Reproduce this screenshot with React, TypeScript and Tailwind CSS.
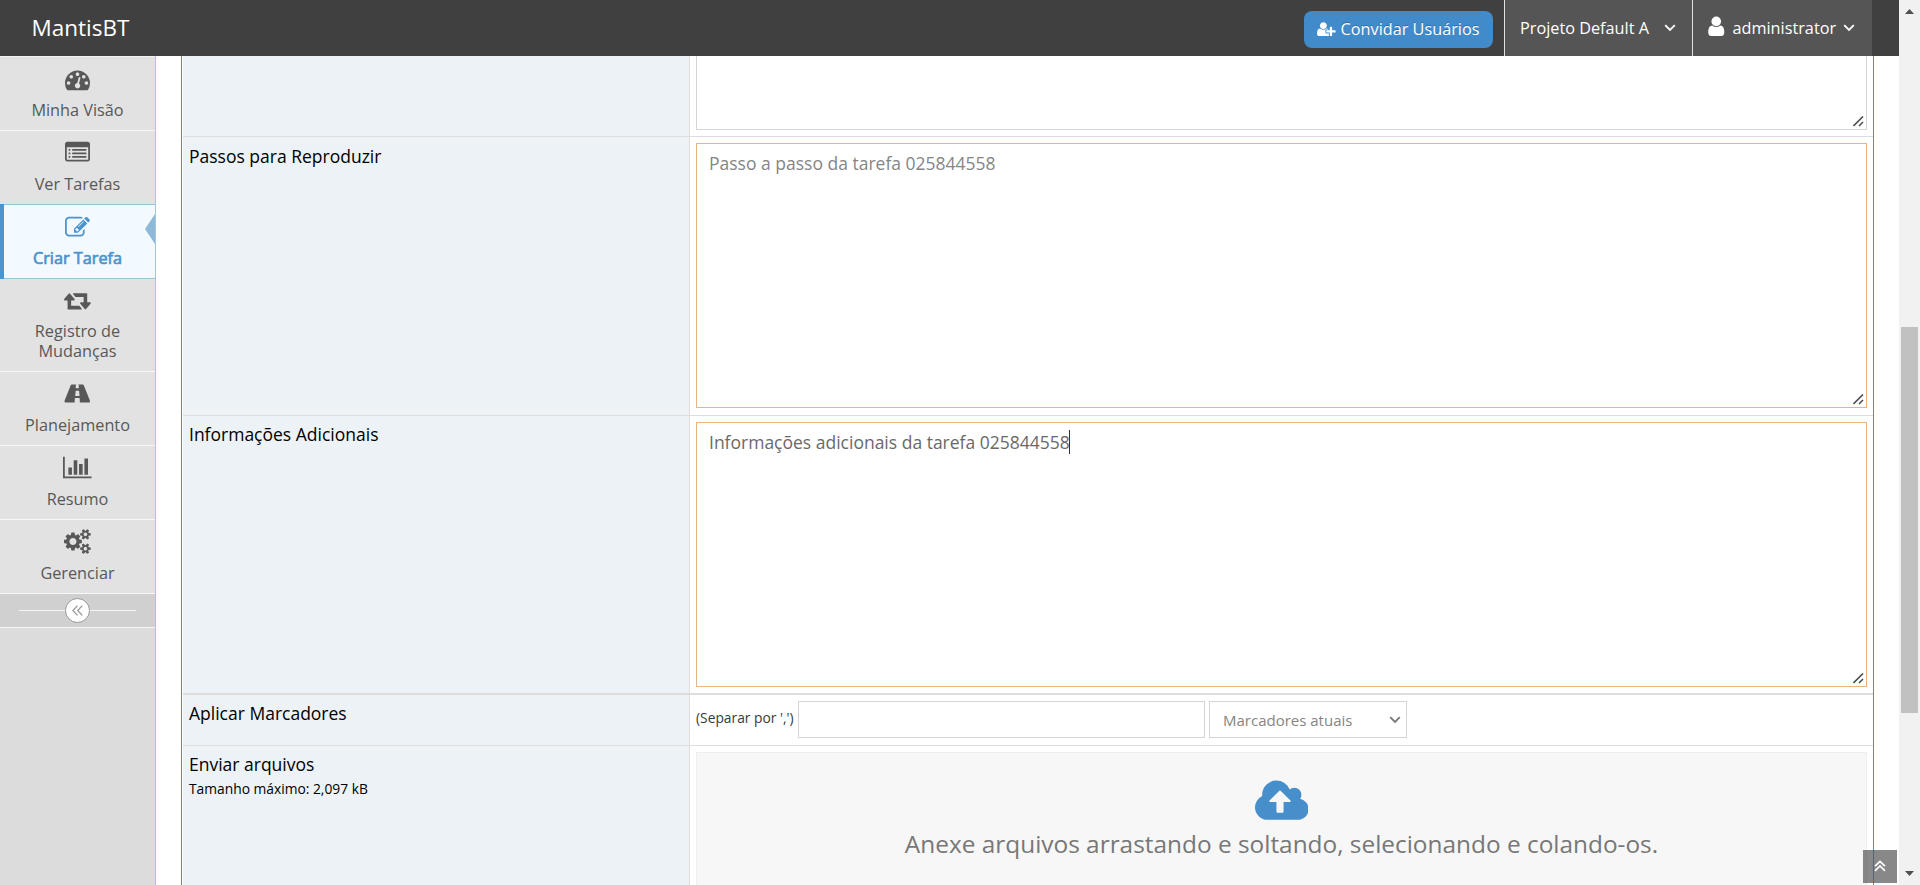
import React from "react";

type IconProps = { size: number; width?: number; d: string; minX?: number; className?: string };

function Icon({ size, width = 1792, d, minX = 0, className = "" }: IconProps) {
  return (
    <svg
      width={(size * width) / 1792}
      height={size}
      viewBox={`${minX} 0 ${width} 1792`}
      fill="currentColor"
      className={`shrink-0 ${className}`}
    >
      <path d={d} />
    </svg>
  );
}

const paths = {
  dashboard:
    "M384 1152q0-53-37.5-90.5t-90.5-37.5-90.5 37.5-37.5 90.5 37.5 90.5 90.5 37.5 90.5-37.5 37.5-90.5zm192-448q0-53-37.5-90.5t-90.5-37.5-90.5 37.5-37.5 90.5 37.5 90.5 90.5 37.5 90.5-37.5 37.5-90.5zm428 481l101-382q6-26-7.5-48.5t-38.5-29.5-48 6.5-30 39.5l-101 382q-60 5-107 43.5t-63 98.5q-20 77 20 146t117 89 146-20 89-117q16-60-6-117t-72-91zm660-33q0-53-37.5-90.5t-90.5-37.5-90.5 37.5-37.5 90.5 37.5 90.5 90.5 37.5 90.5-37.5 37.5-90.5zm-640-640q0-53-37.5-90.5t-90.5-37.5-90.5 37.5-37.5 90.5 37.5 90.5 90.5 37.5 90.5-37.5 37.5-90.5zm448 192q0-53-37.5-90.5t-90.5-37.5-90.5 37.5-37.5 90.5 37.5 90.5 90.5 37.5 90.5-37.5 37.5-90.5zm320 448q0 261-141 483-19 29-54 29h-1402q-35 0-54-29-141-221-141-483 0-182 71-348t191-286 286-191 348-71 348 71 286 191 191 286 71 348z",
  list:
    "M384 1184v64q0 13-9.5 22.5t-22.5 9.5h-64q-13 0-22.5-9.5t-9.5-22.5v-64q0-13 9.5-22.5t22.5-9.5h64q13 0 22.5 9.5t9.5 22.5zm0-256v64q0 13-9.5 22.5t-22.5 9.5h-64q-13 0-22.5-9.5t-9.5-22.5v-64q0-13 9.5-22.5t22.5-9.5h64q13 0 22.5 9.5t9.5 22.5zm0-256v64q0 13-9.5 22.5t-22.5 9.5h-64q-13 0-22.5-9.5t-9.5-22.5v-64q0-13 9.5-22.5t22.5-9.5h64q13 0 22.5 9.5t9.5 22.5zm1152 512v64q0 13-9.5 22.5t-22.5 9.5h-960q-13 0-22.5-9.5t-9.5-22.5v-64q0-13 9.5-22.5t22.5-9.5h960q13 0 22.5 9.5t9.5 22.5zm0-256v64q0 13-9.5 22.5t-22.5 9.5h-960q-13 0-22.5-9.5t-9.5-22.5v-64q0-13 9.5-22.5t22.5-9.5h960q13 0 22.5 9.5t9.5 22.5zm0-256v64q0 13-9.5 22.5t-22.5 9.5h-960q-13 0-22.5-9.5t-9.5-22.5v-64q0-13 9.5-22.5t22.5-9.5h960q13 0 22.5 9.5t9.5 22.5zm128 704v-832q0-13-9.5-22.5t-22.5-9.5h-1472q-13 0-22.5 9.5t-9.5 22.5v832q0 13 9.5 22.5t22.5 9.5h1472q13 0 22.5-9.5t9.5-22.5zm128-1088v1088q0 66-47 113t-113 47h-1472q-66 0-113-47t-47-113v-1088q0-66 47-113t113-47h1472q66 0 113 47t47 113z",
  edit:
    "M888 1184l116-116-152-152-116 116v56h96v96h56zm440-720q-16-16-33 1l-350 350q-17 17-1 33t33-1l350-350q17-17 1-33zm80 594v190q0 119-84.5 203.5t-203.5 84.5h-832q-119 0-203.5-84.5t-84.5-203.5v-832q0-119 84.5-203.5t203.5-84.5h832q63 0 117 25 15 7 18 23 3 17-9 29l-49 49q-14 14-32 8-23-6-45-6h-832q-66 0-113 47t-47 113v832q0 66 47 113t113 47h832q66 0 113-47t47-113v-126q0-13 9-22l64-64q15-15 35-7t20 29zm-96-738l288 288-672 672h-288v-288zm444 132l-92 92-288-288 92-92q28-28 68-28t68 28l152 152q28 28 28 68t-28 68z",
  retweet:
    "M1152 1504q0 13-9.5 22.5t-22.5 9.5h-960q-8 0-13.5-2t-9-7-5.5-8-3-11.5-1-11.5v-600h-192q-26 0-45-19t-19-45q0-24 15-41l320-384q19-22 49-22t49 22l320 384q15 17 15 41 0 26-19 45t-45 19h-192v384h576q16 0 25 11l160 192q7 10 7 21zm640-416q0 24-15 41l-320 384q-20 23-49 23t-49-23l-320-384q-15-17-15-41 0-26 19-45t45-19h192v-384h-576q-16 0-25-12l-160-192q-7-9-7-20 0-13 9.5-22.5t22.5-9.5h960q8 0 13.5 2t9 7 5.5 8 3 11.5 1 11.5v600h192q26 0 45 19t19 45z",
  road:
    "M1111 1056v-4l-24-320q-1-13-11-22.5t-23-9.5h-186q-13 0-23 9.5t-11 22.5l-24 320v4q-1 12 8 20t21 8h244q12 0 21-8t8-20zm749 407q0 73-46 73h-704q13 0 22-9.5t8-22.5l-20-256q-1-13-11-22.5t-23-9.5h-272q-13 0-23 9.5t-11 22.5l-20 256q-1 13 8 22.5t22 9.5h-704q-46 0-46-73 0-54 26-116l417-1044q8-19 26-33t38-14h339q-13 0-23 9.5t-11 22.5l-15 192q-1 14 8 23t22 9h166q13 0 22-9t8-23l-15-192q-1-13-11-22.5t-23-9.5h339q20 0 38 14t26 33l417 1044q26 62 26 116z",
  chart:
    "M640 896v512h-256v-512h256zm384-512v1024h-256v-1024h256zm1024 1152v128h-2048v-1536h128v1408h1920zm-640-896v768h-256v-768h256zm384-384v1152h-256v-1152h256z",
  cogs:
    "M896 896q0-106-75-181t-181-75-181 75-75 181 75 181 181 75 181-75 75-181zm768 512q0-52-38-90t-90-38-90 38-38 90q0 53 37.5 90.5t90.5 37.5 90.5-37.5 37.5-90.5zm0-1024q0-52-38-90t-90-38-90 38-38 90q0 53 37.5 90.5t90.5 37.5 90.5-37.5 37.5-90.5zm-384 421v185q0 10-7 19.5t-16 10.5l-155 24q-11 35-32 76 34 48 90 115 7 11 7 20 0 12-7 19-23 30-82.5 89.5t-78.5 59.5q-11 0-21-7l-115-90q-37 19-77 31-11 108-23 155-7 24-30 24h-186q-11 0-20-7.5t-10-17.5l-23-153q-34-10-75-31l-118 89q-7 7-20 7-11 0-21-8-144-133-144-160 0-9 7-19 10-14 41-53t47-61q-23-44-35-82l-152-24q-10-1-17-9.5t-7-19.5v-185q0-10 7-19.5t16-10.5l155-24q11-35 32-76-34-48-90-115-7-11-7-20 0-12 7-20 22-30 82-89t79-59q11 0 21 7l115 90q34-18 77-32 11-108 23-154 7-24 30-24h186q11 0 20 7.5t10 17.5l23 153q34 10 75 31l118-89q8-7 20-7 11 0 21 8 144 133 144 160 0 8-7 19-12 16-42 54t-45 60q23 48 34 82l152 23q10 2 17 10.5t7 19.5zm640 533v140q0 16-149 31-12 27-30 52 51 113 51 138 0 4-4 7-122 71-124 71-8 0-46-47t-52-68q-20 2-30 2t-30-2q-14 21-52 68t-46 47q-2 0-124-71-4-3-4-7 0-25 51-138-18-25-30-52-149-15-149-31v-140q0-16 149-31 13-29 30-52-51-113-51-138 0-4 4-7 4-2 35-20t59-34 30-16q8 0 46 46.5t52 67.5q20-2 30-2t30 2q51-71 92-112l6-2q4 0 124 70 4 3 4 7 0 25-51 138 17 23 30 52 149 15 149 31zm0-1024v140q0 16-149 31-12 27-30 52 51 113 51 138 0 4-4 7-122 71-124 71-8 0-46-47t-52-68q-20 2-30 2t-30-2q-14 21-52 68t-46 47q-2 0-124-71-4-3-4-7 0-25 51-138-18-25-30-52-149-15-149-31v-140q0-16 149-31 13-29 30-52-51-113-51-138 0-4 4-7 4-2 35-20t59-34 30-16q8 0 46 46.5t52 67.5q20-2 30-2t30 2q51-71 92-112l6-2q4 0 124 70 4 3 4 7 0 25-51 138 17 23 30 52 149 15 149 31z",
  user:
    "M1536 1399q0 109-62.5 187t-150.5 78h-854q-88 0-150.5-78t-62.5-187q0-85 8.5-160.5t31.5-152 58.5-131 94-89 134.5-34.5q131 128 313 128t313-128q76 0 134.5 34.5t94 89 58.5 131 31.5 152 8.5 160.5zm-256-887q0 159-112.5 271.5t-271.5 112.5-271.5-112.5-112.5-271.5 112.5-271.5 271.5-112.5 271.5 112.5 112.5 271.5z",
  userPlus:
    "M704 896q-159 0-271.5-112.5t-112.5-271.5 112.5-271.5 271.5-112.5 271.5 112.5 112.5 271.5-112.5 271.5-271.5 112.5zm960 128h352q13 0 22.5 9.5t9.5 22.5v192q0 13-9.5 22.5t-22.5 9.5h-352v352q0 13-9.5 22.5t-22.5 9.5h-192q-13 0-22.5-9.5t-9.5-22.5v-352h-352q-13 0-22.5-9.5t-9.5-22.5v-192q0-13 9.5-22.5t22.5-9.5h352v-352q0-13 9.5-22.5t22.5-9.5h192q13 0 22.5 9.5t9.5 22.5v352zm-736 224q0 52 38 90t90 38h256v238q-68 50-171 50h-874q-121 0-194-69t-73-190q0-53 3.5-103.5t14-109 26.5-108.5 43-97.5 62-81 85.5-53.5 111.5-20q19 0 39 17 79 61 154.5 91.5t164.5 30.5 164.5-30.5 154.5-91.5q20-17 39-17 132 0 217 96h-223q-52 0-90 38t-38 90v192z",
  cloud:
    "M1280 864q0-14-9-23l-352-352q-9-9-23-9t-23 9l-351 351q-10 12-10 24 0 14 9 23t23 9h224v352q0 13 9.5 22.5t22.5 9.5h192q13 0 22.5-9.5t9.5-22.5v-352h224q13 0 22.5-9.5t9.5-22.5zm640 288q0 159-112.5 271.5t-271.5 112.5h-1088q-185 0-316.5-131.5t-131.5-316.5q0-130 70-240t188-165q-2-30-2-43 0-212 150-362t362-150q156 0 285.5 87t188.5 231q71-62 166-62 106 0 181 75t75 181q0 76-41 138 130 31 213.5 135.5t83.5 238.5z",
};

function Chevron({ className = "" }: { className?: string }) {
  return (
    <svg width="12" height="8" viewBox="0 0 12 8" fill="none" stroke="currentColor" strokeWidth="1.8" className={`shrink-0 ${className}`}>
      <path d="M1.2 1.2 6 6l4.8-4.8" />
    </svg>
  );
}

function Header() {
  return (
    <header className="flex h-14 shrink-0 bg-[#404040] text-white">
      <div className="flex-1 pl-[31.5px] pt-[13px] text-[22.5px] leading-[30px]">MantisBT</div>
      <div className="mr-[11px] mt-[11px] flex h-[37px] w-[189px] items-center rounded-lg bg-[#428bca] pl-[13px] text-[16.25px]">
        <Icon size={16.25} width={2048} d={paths.userPlus} />
        <span className="ml-[5px] whitespace-nowrap [text-shadow:0_-1px_0_rgba(0,0,0,0.25)]">Convidar Usuários</span>
      </div>
      <div className="flex w-[188px] items-center border-l border-[#e1e1e1] bg-[#555] pl-[15px] text-[16.25px]">
        <span className="whitespace-nowrap">Projeto Default A</span>
        <Chevron className="ml-[15px]" />
      </div>
      <div className="flex w-[180px] items-center border-l border-[#e1e1e1] bg-[#555] pl-[12px] text-[16.25px]">
        <Icon size={22.5} d={paths.user} className="mb-[3px]" />
        <span className="ml-[5px] whitespace-nowrap">administrator</span>
        <Chevron className="ml-[7px]" />
      </div>
      <div className="w-[27px]" />
    </header>
  );
}

type Item = { label: string; d: string; width?: number; minX?: number; raised?: boolean };

const before: Item[] = [
  { label: "Minha Visão", d: paths.dashboard },
  { label: "Ver Tarefas", d: paths.list, raised: true },
];
const after: Item[] = [
  { label: "Planejamento", d: paths.road, width: 1920, raised: true },
  { label: "Resumo", d: paths.chart, width: 2048, raised: true },
  { label: "Gerenciar", d: paths.cogs, width: 1920, raised: true },
];

function NavItem({ label, d, width, minX, raised = false, wrap = false }: Item & { wrap?: boolean }) {
  return (
    <div
      className={`flex flex-col items-center border-b border-[#f8f8f8] bg-[#e2e2e2] text-[#585858] ${raised ? "pt-[9px]" : "pt-[10px]"} ${wrap ? "h-[93px]" : "h-[74px]"}`}
    >
      <Icon size={25} d={d} width={width} minX={minX} />
      <span className={`w-[120px] text-center text-[16.25px] leading-5 ${raised && !wrap ? "mt-[9px]" : "mt-[8px]"}`}>{label}</span>
    </div>
  );
}

function Sidebar() {
  return (
    <aside className="flex w-[156px] shrink-0 flex-col border-r border-[#a5c6da] bg-[#dcdcdc]">
      <div className="h-px bg-[#f2f2f2]" />
      {before.map((i) => (
        <NavItem key={i.label} {...i} />
      ))}
      <div className="relative -mt-px flex h-[75px] flex-col items-center border-b border-t border-[#9cc3dc] bg-[#f2f9ff] pt-[10px] text-[#4b94cd]">
        <div className="absolute -bottom-px -top-px left-0 w-1 bg-[#4b94cd]" />
        <Icon size={25} d={paths.edit} />
        <span className="mt-[8px] text-[16.25px] leading-5 [-webkit-text-stroke:0.7px_#4b94cd]">Criar Tarefa</span>
        <svg className="absolute right-0 top-[9px]" width="10" height="30" viewBox="0 0 10 30">
          <path d="M10 0v30L0 15z" fill="#8fb9d8" />
        </svg>
      </div>
      <NavItem label="Registro de Mudanças" d={paths.retweet} width={1920} minX={-128} wrap raised />
      {after.map((i) => (
        <NavItem key={i.label} {...i} />
      ))}
      <div className="flex h-[34px] items-center border-b border-[#f4f4f4] bg-[#d0d0d0] px-[19px]">
        <div className="h-px flex-1 bg-[#f4f4f4]" />
        <div className="flex size-[25px] items-center justify-center rounded-full border border-[#999] bg-white">
          <svg width="11" height="11" viewBox="0 0 11 11" fill="none" stroke="#999" strokeWidth="1.3">
            <path d="M5.5 .6.9 5.5l4.6 4.9M10.3.6 5.7 5.5l4.6 4.9" />
          </svg>
        </div>
        <div className="h-px flex-1 bg-[#f4f4f4]" />
      </div>
    </aside>
  );
}

function Grip() {
  return (
    <svg className="absolute bottom-[2px] right-[2px]" width="11" height="11" viewBox="0 0 11 11" stroke="#4f4f4f" strokeWidth="1.6">
      <path d="M.5 10 10 .5M6 10l4-4" />
    </svg>
  );
}

function Row({
  label,
  className,
  labelPad = "pt-1.5",
  children,
}: {
  label?: React.ReactNode;
  className: string;
  labelPad?: string;
  children: React.ReactNode;
}) {
  return (
    <div className={`flex shrink-0 border-[#ddd] ${className}`}>
      <div className={`w-[507px] shrink-0 border-r border-[#ddd] bg-[#ecf2f5] pl-1.5 text-[17.5px] leading-[25px] text-black ${labelPad}`}>
        {label}
      </div>
      <div className="min-w-0 flex-1 px-1.5 pt-1.5">{children}</div>
    </div>
  );
}

function FormTable() {
  return (
    <div className="ml-[25px] flex w-[1693px] flex-col overflow-hidden border-l border-r border-[#5090c1] pl-px">
      <Row className="h-[81px] border-b">
        <div className="relative -mt-1.5 h-[74px] border border-t-0 border-[#d5d5d5]">
          <Grip />
        </div>
      </Row>
      <Row label="Passos para Reproduzir" labelPad="pt-[7px]" className="h-[279px] border-b">
        <div className="relative h-[265px] border border-[#e8b384] px-3 pt-[7px] text-[17.5px] leading-[25px] text-[#858585]">
          Passo a passo da tarefa 025844558
          <Grip />
        </div>
      </Row>
      <Row label="Informações Adicionais" className="h-[279px] border-b-2">
        <div className="relative flex h-[265px] items-start border border-[#e8b384] px-3 pt-[7px] text-[17.5px] leading-[25px] text-[#696969]">
          <span className="whitespace-nowrap">Informações adicionais da tarefa 025844558</span>
          <span className="-ml-px h-6 w-px bg-[#333]" />
          <Grip />
        </div>
      </Row>
      <Row label="Aplicar Marcadores" className="h-[51px] border-b">
        <div className="flex">
          <span className="w-[102px] pt-[7px] text-[13.8px] leading-5 text-[#393939]">(Separar por ',')</span>
          <div className="h-[37px] w-[407px] border border-[#d5d5d5]" />
          <div className="ml-1 flex h-[37px] w-[198px] items-center justify-between border border-[#d5d5d5] pl-[13px] pr-[5px] text-[15px] text-[#858585]">
            <span className="pt-px">Marcadores atuais</span>
            <Chevron className="text-[#777]" />
          </div>
        </div>
      </Row>
      <Row
        label={
          <>
            <div>Enviar arquivos</div>
            <div className="text-[13.8px] leading-6">Tamanho máximo: 2,097 kB</div>
          </>
        }
        className="h-[200px]"
      >
        <div className="flex h-[194px] flex-col items-center border border-[#eee] bg-[#f7f7f7] pt-[23.5px]">
          <Icon size={50} width={1920} d={paths.cloud} className="text-[#478fca]" />
          <div className="mt-[1.5px] whitespace-nowrap text-[24.4px] leading-8 text-[#777]">
            Anexe arquivos arrastando e soltando, selecionando e colando-os.
          </div>
        </div>
      </Row>
    </div>
  );
}

function Scrollbar() {
  return (
    <div className="flex w-[21px] shrink-0 flex-col items-center bg-[#f1f1f1]">
      <svg width="9" height="5" viewBox="0 0 9 5" className="mt-[9px]" fill="#505050">
        <path d="M4.5 0 9 5H0z" />
      </svg>
      <div className="mt-[313px] h-[386px] w-[17px] bg-[#c1c1c1]" />
      <svg width="9" height="5" viewBox="0 0 9 5" className="mb-[9px] mt-auto" fill="#505050">
        <path d="M0 0h9L4.5 5z" />
      </svg>
    </div>
  );
}

export default function App() {
  return (
    <div className="relative flex h-[885px] w-[1920px] overflow-hidden bg-white font-['Open_Sans',sans-serif]">
      <div className="flex min-w-0 flex-1 flex-col">
        <Header />
        <div className="flex min-h-0 flex-1">
          <Sidebar />
          <FormTable />
        </div>
      </div>
      <Scrollbar />
      <div className="absolute bottom-[2px] right-[23px] flex h-[33px] w-[34px] items-center justify-center bg-[#555]/70">
        <svg width="12" height="12" viewBox="0 0 12 12" fill="none" stroke="#fff" strokeWidth="1.7" className="-mt-px">
          <path d="M1 6.2 6 1.4l5 4.8M1 10.8 6 6l5 4.8" />
        </svg>
      </div>
    </div>
  );
}
